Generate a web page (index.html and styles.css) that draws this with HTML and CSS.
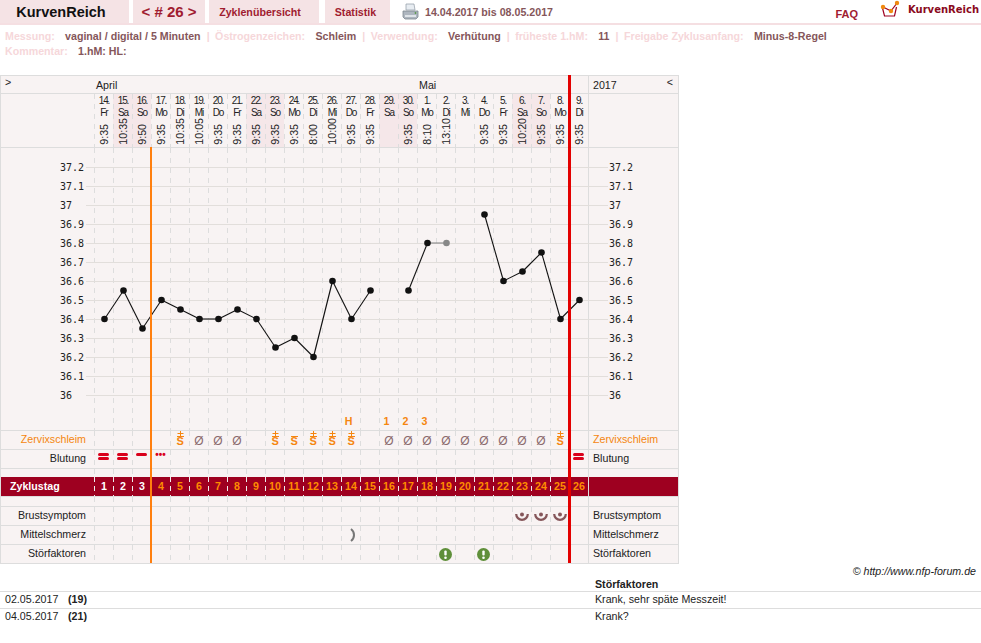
FILE: index.html
```html
<!DOCTYPE html>
<html lang="de">
<head>
    <meta charset="UTF-8">
    <title>KurvenReich</title>
    <link rel="stylesheet" href="styles.css">
</head>
<body>

<div class="topbar">
    <div class="tab tab-brand">KurvenReich</div>
    <div class="tab tab-cycle">&lt; # 26 &gt;</div>
    <div class="tab tab-overview">Zyklenübersicht</div>
    <div class="tab tab-stats">Statistik</div>
    <svg class="printer" width="17" height="18" viewBox="0 0 17 18">
        <path d="M4 1h8l1 6H4z" fill="#e8edf2" stroke="#9aa3ad" stroke-width=".8"/>
        <path d="M1 8h15v6l-2 2H3l-2-2z" fill="#aeb6bf" stroke="#7f8891" stroke-width=".8"/>
        <path d="M3 12h11v2H3z" fill="#dfe4e8"/>
        <circle cx="13.5" cy="10" r=".9" fill="#5a9a4a"/>
    </svg>
    <div class="range">14.04.2017 bis 08.05.2017</div>
    <div class="faq">FAQ</div>
    <div class="logo">
        <svg width="22" height="19" viewBox="0 0 22 19">
            <path d="M2.500 8l2 8h10l2-9" fill="none" stroke="#9e0020" stroke-width="1.200"/>
            <path d="M3 7l8 4 6-8" fill="none" stroke="#9e0020" stroke-width="1.200"/>
            <circle cx="3" cy="7" r="2.200" fill="#f08a10"/>
            <circle cx="11" cy="11" r="2.200" fill="#f08a10"/>
            <circle cx="17" cy="3" r="2.200" fill="#f08a10"/>
        </svg>
        <span>KurvenReich</span>
    </div>
</div>

<div class="meta">
    <div>
        <span class="meta-label">Messung:</span><span class="meta-value">vaginal / digital / 5 Minuten</span><span class="meta-sep">|</span><span class="meta-label">Östrogenzeichen:</span><span class="meta-value">Schleim</span><span class="meta-sep">|</span><span class="meta-label">Verwendung:</span><span class="meta-value">Verhütung</span><span class="meta-sep">|</span><span class="meta-label">früheste 1.hM:</span><span class="meta-value">11</span><span class="meta-sep">|</span><span class="meta-label">Freigabe Zyklusanfang:</span><span class="meta-value">Minus-8-Regel</span>
    </div>
    <div>
        <span class="meta-label">Kommentar:</span><span class="meta-value">1.hM: HL:</span>
    </div>
</div>

<div class="chart" id="chart">
    <div class="cycle-start"></div>
    <div class="cycle-end"></div>
</div>

<div class="credit">© http://www.nfp-forum.de</div>

<div class="notes">
    <div class="notes-row notes-head"><span></span><span></span><span>Störfaktoren</span></div>
    <div class="notes-row"><span>02.05.2017</span><b>(19)</b><span>Krank, sehr späte Messzeit!</span></div>
    <div class="notes-row"><span>04.05.2017</span><b>(21)</b><span>Krank?</span></div>
</div>

<script src="script.js"></script>
</body>
</html>
```

FILE: styles.css
```css
body {
    font-family: "Liberation Sans", Arial, sans-serif;
    font-size: 10.67px;
    margin: 0;
    color: #222;
    background: #fff;
}

/* top bar */
.topbar {
    display: flex;
    height: 23px;
    border-bottom: 2px solid #f5dfe2;
}
.tab {
    background: #f5e3e5;
    color: #a01c30;
    font-weight: bold;
    line-height: 24px;
    text-align: center;
    margin-right: 4px;
    box-sizing: border-box;
}
.tab-brand {
    width: 129px;
    color: #111;
    font-size: 14.5px;
    padding-right: 7px;
}
.tab-cycle {
    width: 72px;
    font-size: 15px;
}
.tab-overview {
    width: 110px;
    margin-right: 6px;
    padding-right: 8px;
}
.tab-stats {
    width: 65px;
    margin-right: 12px;
    padding-right: 4px;
}
.printer {
    margin-top: 3px;
}
.range {
    color: #85565a;
    font-weight: bold;
    line-height: 24px;
    margin-left: 6px;
}
.faq {
    color: #a01c30;
    font-size: 11px;
    font-weight: bold;
    margin-left: auto;
    padding-top: 8px;
}
.logo {
    display: flex;
    align-items: flex-start;
    margin-left: 22px;
    width: 101px;
}
.logo span {
    font-family: "DejaVu Sans", sans-serif;
    font-size: 10px;
    font-weight: bold;
    color: #8a0a20;
    margin-left: 6px;
    padding-top: 4px;
}

/* cycle settings */
.meta {
    height: 50px;
    padding: 4px 0 0 5px;
    box-sizing: border-box;
    font-weight: bold;
    line-height: 15px;
}
.meta-label {
    color: #f6d7da;
}
.meta-value {
    color: #85565a;
    margin: 0 6px 0 10.3px;
}
.meta-sep {
    color: #f6d7da;
    margin-right: 5.5px;
}

/* chart table */
.chart {
    position: relative;
    width: 679px;
    box-sizing: border-box;
    border: 1px solid #ddd;
    background: #f8f3f3;
}
.row {
    display: grid;
    grid-template-columns: 93px repeat(26, 19px) 1fr;
    border-bottom: 1px solid #ddd;
    height: 19px;
    box-sizing: border-box;
    line-height: 17px;
}
.row:last-child {
    height: 18px;
    border-bottom: none;
}
.row-month {
    height: 18px;
    line-height: 18px;
}
.row-head {
    height: 54px;
}
.row-plot {
    position: relative;
    height: 283px;
}
.row-gap-top {
    height: 8px;
    border-bottom: none;
}
.row-gap-bottom {
    height: 10px;
}
.row-band {
    height: 20px;
    background: #9e0020;
    line-height: 19px;
    font-weight: bold;
}

.day {
    background-image: repeating-linear-gradient(to bottom, #ddd 0, #ddd 5px, transparent 5px, transparent 10px);
    background-size: 1px 100%;
    background-repeat: no-repeat;
    display: flex;
    flex-direction: column;
    align-items: center;
    justify-content: center;
    padding-left: 1px;
}
.day svg {
    margin-left: -1px;
}
.weekend {
    background-color: #f5e7e9;
}
.row-band .day {
    background-image: repeating-linear-gradient(to bottom, #eee 0, #eee 5px, transparent 5px, transparent 9px);
    color: #ff8c00;
}
.row-band .day.bleeding {
    color: #fff;
}

.label-left {
    text-align: right;
    padding-right: 8px;
}
.label-right {
    border-left: 1px solid #ddd;
    padding-left: 4px;
    position: relative;
}
.label-orange {
    color: #f5860f;
}
.label-band {
    color: #fff;
    font-weight: bold;
    text-align: left;
    padding-left: 9px;
}
.month {
    white-space: nowrap;
    padding-left: 2px;
}
.arrow-left {
    padding-left: 4px;
    line-height: 13px;
}
.arrow-right {
    position: absolute;
    right: 5px;
    top: -3px;
}

.head-cell {
    justify-content: space-between;
    padding-top: 1px;
    padding-bottom: 2px;
    box-sizing: border-box;
}
.head-date {
    font-size: 10px;
    line-height: 11.5px;
    letter-spacing: -1.1px;
    text-align: center;
    white-space: nowrap;
}
.head-time {
    writing-mode: vertical-rl;
    transform: rotate(180deg);
    line-height: 12px;
}

.plot-svg {
    position: absolute;
    left: 0;
    top: 0;
}
.axis-text {
    font-family: "DejaVu Sans Mono", monospace;
    font-size: 10px;
    fill: #222;
}
.peak {
    justify-content: flex-end;
    padding-left: 0;
    padding-right: 4px;
    box-sizing: border-box;
    color: #f5860f;
    font-weight: bold;
    line-height: 18px;
}

.slime {
    justify-content: flex-end;
    padding-bottom: 3px;
    box-sizing: border-box;
    color: #f5860f;
    font-weight: bold;
}
.slime svg {
    margin: 0;
}
.s {
    border-top: 1px solid #f5860f;
    font-size: 11px;
    line-height: 9px;
    width: 7px;
    text-align: center;
}
.none {
    color: #8b6a6e;
    font-weight: normal;
    font-size: 12px;
    line-height: 10px;
}

.blood {
    justify-content: flex-start;
    padding-top: 3px;
    padding-left: 0;
    box-sizing: border-box;
}
.bar {
    display: block;
    width: 11px;
    height: 3px;
    border-radius: 2px;
    background: #d9001b;
    margin: 0 1px 1px 0;
}
.dots {
    color: #d9001b;
    font-size: 10px;
    font-weight: bold;
    line-height: 4px;
}

.cycle-start {
    position: absolute;
    left: 149px;
    top: 71px;
    bottom: 0;
    width: 2px;
    background: #ff7f0e;
    z-index: 2;
}
.cycle-end {
    position: absolute;
    left: 567px;
    top: -1px;
    bottom: 0;
    width: 3px;
    background: #e30000;
    z-index: 2;
}

/* notes under the chart */
.credit {
    font-style: italic;
    text-align: right;
    padding-right: 5px;
    line-height: 14px;
}
.notes-row {
    display: grid;
    grid-template-columns: 63px 527px 1fr;
    padding-left: 5px;
    height: 17px;
    line-height: 15px;
    box-sizing: border-box;
    border-bottom: 1px solid #ddd;
}
.notes-row:last-child {
    border-bottom: none;
}
.notes-head {
    height: 14px;
    line-height: 13px;
    font-weight: bold;
}
```

FILE: script.js
```js
const days = [
    ['14.','Fr','9:35'],['15.','Sa','10:35'],['16.','So','9:50'],['17.','Mo','9:35'],['18.','Di','10:35'],
    ['19.','Mi','10:05'],['20.','Do','9:35'],['21.','Fr','9:35'],['22.','Sa','9:35'],['23.','So','9:35'],
    ['24.','Mo','9:35'],['25.','Di','8:00'],['26.','Mi','10:00'],['27.','Do','9:35'],['28.','Fr','9:35'],
    ['29.','Sa',''],['30.','So','9:35'],['1.','Mo','8:10'],['2.','Di','13:10'],['3.','Mi',''],
    ['4.','Do','9:35'],['5.','Fr','9:35'],['6.','Sa','10:20'],['7.','So','9:35'],['8.','Mo','9:35'],['9.','Di','9:35']
];

// temperature per cycle day, null = not measured, grey = left out of the curve
const temps = [36.4,36.55,36.35,36.5,36.45,36.4,36.4,36.45,36.4,36.25,36.3,36.2,36.6,36.4,36.55,
    null,36.55,36.8,36.8,null,36.95,36.6,36.65,36.75,36.4,36.5];
const greyDay = 18;

const peak = { 14: 'H', 16: '1', 17: '2', 18: '3' };
const slime = { 5:'+',6:'0',7:'0',8:'0',10:'+',11:'s',12:'+',13:'+',14:'+',16:'0',17:'0',18:'0',19:'0',
    20:'0',21:'0',22:'0',23:'0',24:'0',25:'+' };
const blood = { 1: 2, 2: 2, 3: 1, 4: 'dots', 26: 2 };

const plusIcon = '<svg width="7" height="5" viewBox="0 0 7 5"><path d="M3.500 0v5M0.500 2.500h6" stroke="#f5860f" stroke-width="1"/></svg>';
const breastIcon = '<svg width="14" height="11" viewBox="0 0 14 11"><circle cx="7" cy="3.500" r="2" fill="#85565a"/><path d="M1.200 3a5.800 5.800 0 0 0 11.600 0" fill="none" stroke="#85565a" stroke-width="2.200"/></svg>';
const painIcon = '<svg width="10" height="14" viewBox="0 0 10 14"><path d="M5 1c4 3 4 9 0 12" fill="none" stroke="#777" stroke-width="2"/></svg>';
const warnIcon = '<svg width="13" height="13" viewBox="0 0 13 13"><circle cx="6.500" cy="6.500" r="6.500" fill="#5f8f3a"/><rect x="5.300" y="2.500" width="2.400" height="5" rx="1" fill="#fff"/><circle cx="6.500" cy="9.700" r="1.300" fill="#fff"/></svg>';

function dayCells(render) {
    let html = '';
    for (let i = 1; i <= 26; i++) {
        html += render(i);
    }
    return html;
}

function symptomRow(label, orange, render) {
    const cls = orange ? ' label-orange' : '';
    return `<div class="row">
        <div class="label-left${cls}">${label}</div>
        ${dayCells(render)}
        <div class="label-right${cls}">${label}</div>
    </div>`;
}

function slimeCell(i) {
    const v = slime[i];
    if (v === '+') return `<div class="day slime">${plusIcon}<span class="s">S</span></div>`;
    if (v === 's') return '<div class="day slime"><span class="s">S</span></div>';
    if (v === '0') return '<div class="day slime"><span class="none">Ø</span></div>';
    return '<div class="day"></div>';
}

function bloodCell(i) {
    const v = blood[i];
    if (v === 2) return '<div class="day blood"><i class="bar"></i><i class="bar"></i></div>';
    if (v === 1) return '<div class="day blood"><i class="bar"></i></div>';
    if (v === 'dots') return '<div class="day blood"><span class="dots">•••</span></div>';
    return '<div class="day"></div>';
}

function iconRow(label, marks, icon) {
    return symptomRow(label, false, i => `<div class="day">${marks.includes(i) ? icon : ''}</div>`);
}

function plotSvg() {
    const X = i => 103.5 + 19 * i;
    const Y = v => 395 - 148 - (v - 36) * 190;
    let s = '<svg class="plot-svg" width="677" height="282">';

    for (let k = 0; k <= 12; k++) {
        const v = 36 + k / 10;
        const y = Math.round(Y(v));
        s += `<line x1="85" x2="607" y1="${y + 0.5}" y2="${y + 0.5}" stroke="#e2dedb"/>`;
        const text = String(Math.round(v * 10) / 10);
        s += `<text class="axis-text" x="59" y="${y + 4}">${text}</text>`;
        s += `<text class="axis-text" x="608" y="${y + 4}">${text}</text>`;
    }

    for (let i = 0; i < temps.length - 1; i++) {
        if (temps[i] === null || temps[i + 1] === null) continue;
        const color = i + 1 === greyDay ? '#888' : '#111';
        s += `<line x1="${X(i)}" y1="${Y(temps[i])}" x2="${X(i + 1)}" y2="${Y(temps[i + 1])}" stroke="${color}" stroke-width="1.100"/>`;
    }
    temps.forEach((v, i) => {
        if (v === null) return;
        s += `<circle cx="${X(i)}" cy="${Y(v)}" r="3.300" fill="${i === greyDay ? '#888' : '#111'}"/>`;
    });
    return s + '</svg>';
}

const monthRow = `<div class="row row-month">
    <div class="arrow-left">&gt;</div>
    ${dayCells(i => `<div class="month">${i === 1 ? 'April' : i === 18 ? 'Mai' : ''}</div>`)}
    <div class="label-right">2017<span class="arrow-right">&lt;</span></div>
</div>`;

const headRow = `<div class="row row-head">
    <div></div>
    ${dayCells(i => {
        const d = days[i - 1];
        const weekend = d[1] === 'Sa' || d[1] === 'So' ? ' weekend' : '';
        return `<div class="day head-cell${weekend}"><div class="head-date">${d[0]}<br>${d[1]}</div><div class="head-time">${d[2]}</div></div>`;
    })}
    <div class="label-right"></div>
</div>`;

const plotRow = `<div class="row row-plot">
    <div></div>
    ${dayCells(i => `<div class="day peak">${peak[i] || ''}</div>`)}
    <div class="label-right"></div>
    ${plotSvg()}
</div>`;

const gap = cls => `<div class="row ${cls}"><div></div>${dayCells(() => '<div class="day"></div>')}<div class="label-right"></div></div>`;

const bandRow = `<div class="row row-band">
    <div class="label-band">Zyklustag</div>
    ${dayCells(i => `<div class="day${i <= 3 ? ' bleeding' : ''}">${i}</div>`)}
    <div class="label-right"></div>
</div>`;

document.getElementById('chart').insertAdjacentHTML('beforeend',
    monthRow + headRow + plotRow +
    symptomRow('Zervixschleim', true, slimeCell) +
    symptomRow('Blutung', false, bloodCell) +
    gap('row-gap-top') + bandRow + gap('row-gap-bottom') +
    iconRow('Brustsymptom', [23, 24, 25], breastIcon) +
    iconRow('Mittelschmerz', [14], painIcon) +
    iconRow('Störfaktoren', [19, 21], warnIcon));
```
